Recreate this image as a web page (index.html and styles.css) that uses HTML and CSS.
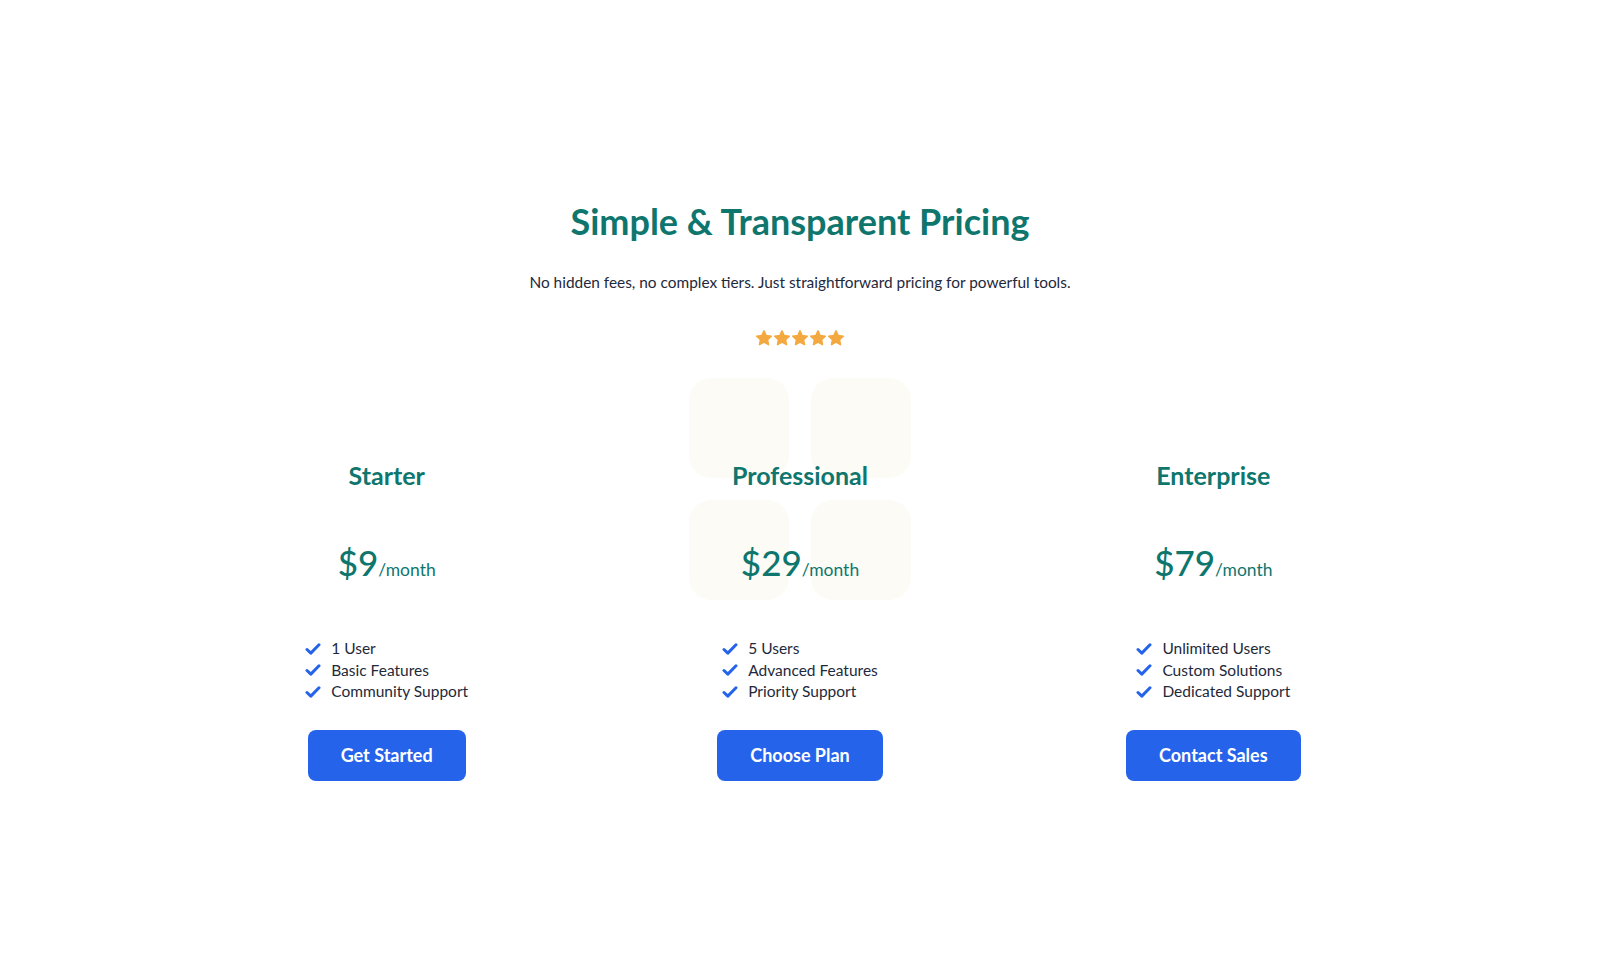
FILE: index.html
```html
<!DOCTYPE html>
<html lang="en">
<head>
<meta charset="utf-8">
<title>Pricing</title>
<link rel="stylesheet" href="styles.css">
</head>
<body>
<section class="pricing">
  <h1 class="title">Simple &amp; Transparent Pricing</h1>
  <p class="subtitle">No hidden fees, no complex tiers. Just straightforward pricing for powerful tools.</p>
  <div class="stars">
    <svg viewBox="0 0 24 24"><path d="M12 2.5l2.9 6.2 6.8.8-5 4.7 1.3 6.7L12 17.6l-6 3.3 1.3-6.7-5-4.7 6.8-.8z"/></svg>
    <svg viewBox="0 0 24 24"><path d="M12 2.5l2.9 6.2 6.8.8-5 4.7 1.3 6.7L12 17.6l-6 3.3 1.3-6.7-5-4.7 6.8-.8z"/></svg>
    <svg viewBox="0 0 24 24"><path d="M12 2.5l2.9 6.2 6.8.8-5 4.7 1.3 6.7L12 17.6l-6 3.3 1.3-6.7-5-4.7 6.8-.8z"/></svg>
    <svg viewBox="0 0 24 24"><path d="M12 2.5l2.9 6.2 6.8.8-5 4.7 1.3 6.7L12 17.6l-6 3.3 1.3-6.7-5-4.7 6.8-.8z"/></svg>
    <svg viewBox="0 0 24 24"><path d="M12 2.5l2.9 6.2 6.8.8-5 4.7 1.3 6.7L12 17.6l-6 3.3 1.3-6.7-5-4.7 6.8-.8z"/></svg>
  </div>
  <div class="plans">
    <div class="decor">
      <span></span><span></span><span></span><span></span>
    </div>
    <div class="plan">
      <h3 class="plan-name">Starter</h3>
      <div class="price"><span class="amount">$9</span><span class="period">/month</span></div>
      <ul class="features">
        <li><svg viewBox="0 0 16 16"><path d="M2 8.5l3.8 3.6L14 3.8"/></svg>1 User</li>
        <li><svg viewBox="0 0 16 16"><path d="M2 8.5l3.8 3.6L14 3.8"/></svg>Basic Features</li>
        <li><svg viewBox="0 0 16 16"><path d="M2 8.5l3.8 3.6L14 3.8"/></svg>Community Support</li>
      </ul>
      <a class="btn" href="#">Get Started</a>
    </div>
    <div class="plan">
      <h3 class="plan-name">Professional</h3>
      <div class="price"><span class="amount">$29</span><span class="period">/month</span></div>
      <ul class="features">
        <li><svg viewBox="0 0 16 16"><path d="M2 8.5l3.8 3.6L14 3.8"/></svg>5 Users</li>
        <li><svg viewBox="0 0 16 16"><path d="M2 8.5l3.8 3.6L14 3.8"/></svg>Advanced Features</li>
        <li><svg viewBox="0 0 16 16"><path d="M2 8.5l3.8 3.6L14 3.8"/></svg>Priority Support</li>
      </ul>
      <a class="btn" href="#">Choose Plan</a>
    </div>
    <div class="plan">
      <h3 class="plan-name">Enterprise</h3>
      <div class="price"><span class="amount">$79</span><span class="period">/month</span></div>
      <ul class="features">
        <li><svg viewBox="0 0 16 16"><path d="M2 8.5l3.8 3.6L14 3.8"/></svg>Unlimited Users</li>
        <li><svg viewBox="0 0 16 16"><path d="M2 8.5l3.8 3.6L14 3.8"/></svg>Custom Solutions</li>
        <li><svg viewBox="0 0 16 16"><path d="M2 8.5l3.8 3.6L14 3.8"/></svg>Dedicated Support</li>
      </ul>
      <a class="btn" href="#">Contact Sales</a>
    </div>
  </div>
</section>
</body>
</html>
```

FILE: styles.css
```css
* { box-sizing: border-box; }
html, body { margin: 0; padding: 0; background: #ffffff; }
body {
  font-family: "Lato", "Noto Sans", sans-serif;
  color: #1e293b;
}
.pricing {
  padding-top: 199px;
  text-align: center;
}
.title {
  margin: 0;
  font-size: 36px;
  line-height: 44px;
  font-weight: 700;
  color: #0f766e;
}
.subtitle {
  margin: 28px 0 0;
  font-size: 15.4px;
  line-height: 22px;
  color: #1e293b;
}
.stars {
  margin-top: 36px;
  display: flex;
  justify-content: center;
  gap: 0;
}
.stars svg {
  width: 18px;
  height: 18px;
  fill: #f4a940;
  stroke: #f4a940;
  stroke-width: 2;
  stroke-linejoin: round;
}
.plans {
  position: relative;
  max-width: 1240px;
  margin: 31px auto 0;
  padding-top: 82px;
  display: grid;
  grid-template-columns: repeat(3, 1fr);
}
.decor {
  position: absolute;
  top: 0;
  left: 50%;
  transform: translateX(-50%);
  display: grid;
  grid-template-columns: 100px 100px;
  grid-auto-rows: 100px;
  gap: 22px;
}
.decor span {
  background: #fcfbf5;
  border-radius: 22px;
}
.plan {
  position: relative;
  display: flex;
  flex-direction: column;
  align-items: center;
}
.plan-name {
  margin: 0;
  font-size: 25px;
  line-height: 30px;
  font-weight: 700;
  color: #0f766e;
}
.price {
  margin-top: 49px;
  color: #0f766e;
  line-height: 46px;
}
.amount {
  font-size: 35px;
  font-weight: 500;
}
.period {
  font-size: 17.5px;
}
.features {
  list-style: none;
  margin: 45px 0 0;
  padding: 0;
  text-align: left;
}
.features li {
  display: flex;
  align-items: center;
  font-size: 15.5px;
  line-height: 21.5px;
  color: #1e293b;
}
.features svg {
  width: 16px;
  height: 16px;
  margin-right: 10px;
  fill: none;
  stroke: #2563eb;
  stroke-width: 3;
  stroke-linecap: round;
  stroke-linejoin: round;
}
.btn {
  margin-top: 27px;
  display: inline-block;
  padding: 0 33px;
  height: 51px;
  line-height: 51px;
  border-radius: 8px;
  background: #2563eb;
  color: #ffffff;
  font-size: 18px;
  font-weight: 700;
  text-decoration: none;
}
```
